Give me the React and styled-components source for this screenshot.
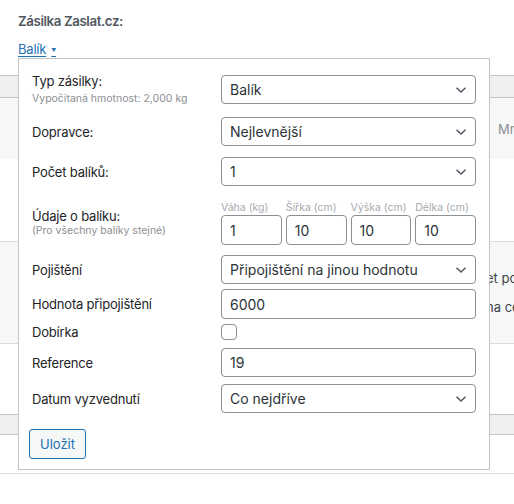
import React from 'react';
import styled, { createGlobalStyle } from 'styled-components';

const Global = createGlobalStyle`
  body {
    margin: 0;
    background: #fff;
    font-family: Inter, "Noto Sans", "Liberation Sans", sans-serif;
    color: #1d2327;
  }
`;

const Page = styled.div`
  position: relative;
  width: 514px;
  height: 504px;
  overflow: hidden;
`;

const Header = styled.div`
  height: 75px;
  padding: 13px 18px 0;
  box-sizing: border-box;
`;

const Title = styled.div`
  font-size: 13.3px;
  font-weight: 600;
  letter-spacing: -0.4px;
  color: #50575e;
  line-height: 17px;
`;

const Toggle = styled.a`
  display: inline-block;
  margin-top: 11px;
  font-size: 13px;
  line-height: 16px;
  letter-spacing: -0.2px;
  color: #2271b1;
  text-decoration: underline;
  text-underline-offset: 2px;
`;

const Caret = styled.span`
  font-size: 5px;
  margin-left: 5px;
  vertical-align: 2px;
`;

const Band = styled.div`
  height: ${p => p.$h}px;
  box-sizing: border-box;
  background: #f0f0f1;
  border-top: 1px solid #c3c4c7;
  border-bottom: 1px solid #c3c4c7;
`;

const BgRow = styled.div`
  height: ${p => p.$h}px;
  box-sizing: border-box;
  background: ${p => (p.$gray ? '#f6f7f7' : '#fff')};
  border-bottom: ${p => (p.$line ? '1px solid #dcdcde' : 'none')};
  display: flex;
  flex-direction: column;
  justify-content: center;
  gap: 13px;
  padding-left: ${p => p.$pl || 0}px;
  white-space: nowrap;
  font-size: 13px;
`;

const BgText = styled.div`
  color: ${p => (p.$muted ? '#8c8f94' : '#3c434a')};
  line-height: 16px;
`;

const Popup = styled.div`
  position: absolute;
  left: 18px;
  top: 58px;
  width: 472px;
  box-sizing: border-box;
  background: #fff;
  border: 1px solid #c3c4c7;
  padding: 14px 13px 10px;
  display: flex;
  flex-direction: column;
`;

const Row = styled.div`
  display: grid;
  grid-template-columns: 189px 255px;
  align-items: center;
  margin-top: ${p => p.$mt || 0}px;
`;

const Label = styled.div`
  font-size: 13px;
  line-height: 16px;
  letter-spacing: -0.2px;
  color: #1d2327;
`;

const Hint = styled.div`
  font-size: 10.5px;
  line-height: 14px;
  margin-top: ${p => p.$gap}px;
  color: #8c8f94;
`;

const Select = styled.div`
  height: 29px;
  box-sizing: border-box;
  border: 1px solid #8c8f94;
  border-radius: 4px;
  padding: 0 8px 0 8px;
  display: flex;
  align-items: center;
  justify-content: space-between;
  font-size: 14px;
  color: #2c3338;
`;

const Input = styled.div`
  height: ${p => p.$h || 29}px;
  box-sizing: border-box;
  border: 1px solid #8c8f94;
  border-radius: 4px;
  padding: 0 8px;
  display: flex;
  align-items: center;
  font-size: 14px;
  color: #2c3338;
`;

const Dims = styled.div`
  display: grid;
  grid-template-columns: repeat(4, 1fr);
  gap: 4px;
`;

const Dim = styled.div`
  display: flex;
  flex-direction: column;
  gap: 1px;
`;

const DimLabel = styled.div`
  font-size: 10.5px;
  line-height: 13px;
  color: #a7aaad;
  white-space: nowrap;
`;

const Check = styled.div`
  width: 16px;
  height: 16px;
  box-sizing: border-box;
  border: 1px solid #8c8f94;
  border-radius: 4px;
`;

const Button = styled.button`
  align-self: flex-start;
  margin: 16px 0 0 -3px;
  height: 30px;
  padding: 0 10px;
  background: #f6f7f7;
  border: 1px solid #2271b1;
  border-radius: 3px;
  color: #2271b1;
  font-family: inherit;
  font-size: 13px;
`;

const Chevron = () => (
  <svg width="12" height="8" viewBox="0 0 12 8">
    <path d="M1.5 1.8 6 6l4.5-4.2" fill="none" stroke="#50575e" strokeWidth="1.5" />
  </svg>
);

const Field = ({ label, hint, hintGap = 3, children, mt }) => (
  <Row $mt={mt}>
    <div>
      <Label>{label}</Label>
      {hint && <Hint $gap={hintGap}>{hint}</Hint>}
    </div>
    {children}
  </Row>
);

const Dropdown = ({ value }) => (
  <Select>
    <span>{value}</span>
    <Chevron />
  </Select>
);

const dims = [
  ['Váha (kg)', '1'],
  ['Šířka (cm)', '10'],
  ['Výška (cm)', '10'],
  ['Délka (cm)', '10'],
];

export default function App() {
  return (
    <Page>
      <Global />
      <Header>
        <Title>Zásilka Zaslat.cz:</Title>
        <Toggle>Balík<Caret>▼</Caret></Toggle>
      </Header>
      <Band $h={23} />
      <BgRow $h={61} $gray $pl={498}>
        <BgText $muted>Množství</BgText>
      </BgRow>
      <BgRow $h={83} $line />
      <BgRow $h={102} $gray $line $pl={486}>
        <BgText>et položky</BgText>
        <BgText>na cenu</BgText>
      </BgRow>
      <BgRow $h={70} />
      <Band $h={21} />
      <BgRow $h={39} $line />

      <Popup>
        <Field label="Typ zásilky:" hint="Vypočítaná hmotnost: 2,000 kg">
          <Dropdown value="Balík" />
        </Field>
        <Field label="Dopravce:" mt={11}>
          <Dropdown value="Nejlevnější" />
        </Field>
        <Field label="Počet balíků:" mt={11}>
          <Dropdown value="1" />
        </Field>
        <Field label="Údaje o balíku:" hint="(Pro všechny balíky stejné)" hintGap={0} mt={15}>
          <Dims>
            {dims.map(([l, v]) => (
              <Dim key={l}>
                <DimLabel>{l}</DimLabel>
                <Input $h={30}>{v}</Input>
              </Dim>
            ))}
          </Dims>
        </Field>
        <Field label="Pojištění" mt={10}>
          <Dropdown value="Připojištění na jinou hodnotu" />
        </Field>
        <Field label="Hodnota připojištění" mt={5}>
          <Input $h={30}>6000</Input>
        </Field>
        <Field label="Dobírka" mt={5}>
          <Check />
        </Field>
        <Field label="Reference" mt={8}>
          <Input>19</Input>
        </Field>
        <Field label="Datum vyzvednutí" mt={7}>
          <Dropdown value="Co nejdříve" />
        </Field>
        <Button>Uložit</Button>
      </Popup>
    </Page>
  );
}
